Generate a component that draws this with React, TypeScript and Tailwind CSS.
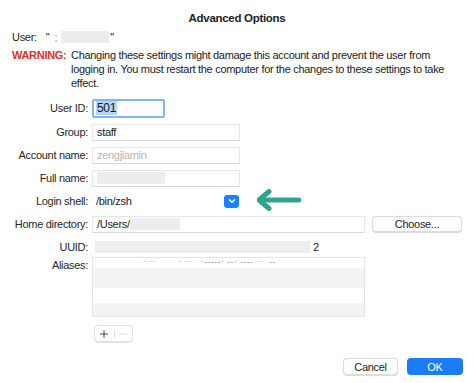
import { Plus, Minus } from 'lucide-react';

function Label({ children }: { children: React.ReactNode }) {
  return <div className="w-[84px] shrink-0 pr-[4px] text-right text-[#262626] whitespace-nowrap">{children}</div>;
}

function Field({ children, className = '' }: { children?: React.ReactNode; className?: string }) {
  return (
    <div
      className={`h-[17px] flex items-center border border-[#e6e6e6] border-b-[#d9d9d9] bg-white px-[4px] ${className}`}
    >
      {children}
    </div>
  );
}

function Redacted({ w }: { w: string }) {
  return <span className={`inline-block h-[12px] bg-[#ededed] ${w}`} />;
}

export default function App() {
  return (
    <div className="w-[474px] h-[383px] bg-white text-[11px] leading-[14px] tracking-[-0.3px] text-[#222] font-['Liberation_Sans',Arial,sans-serif] overflow-hidden">
      {/* Title */}
      <div className="pt-[11px] h-[25px] text-center text-[11.5px] font-bold text-[#1d1d1d]">Advanced Options</div>

      {/* User */}
      <div className="mt-[5px] px-[12px] flex items-center h-[14px]">
        <span>User:</span>
        <span className="ml-[9px]">"</span>
        <span className="ml-[5px] text-[#999]">;</span>
        <Redacted w="w-[48px] ml-[4px]" />
        <span className="ml-[1px]">"</span>
      </div>

      {/* Warning */}
      <div className="mt-[4px] pl-[12px] pr-[8px] flex">
        <div className="w-[59px] shrink-0 font-bold text-[#e0311f]">WARNING:</div>
        <div>
          Changing these settings might damage this account and prevent the user from logging in. You must restart the
          computer for the changes to these settings to take effect.
        </div>
      </div>

      {/* Form */}
      <div className="mt-[9px] pl-[8px] flex flex-col gap-[5px]">
        <div className="flex items-center h-[18px]">
          <Label>User ID:</Label>
          <div className="h-[19px] w-[73px] flex items-center rounded-[2px] border-[2px] border-[#86b4f2] px-[2px]">
            <span className="bg-[#b4d5fb] px-[1px] text-[12px] text-[#111]">501</span>
          </div>
        </div>

        <div className="mt-[1px] flex items-center h-[18px]">
          <Label>Group:</Label>
          <Field className="w-[148px]">staff</Field>
        </div>

        <div className="flex items-center h-[18px]">
          <Label>Account name:</Label>
          <Field className="w-[148px] text-[#b4b4b4]">zengjiamin</Field>
        </div>

        <div className="flex items-center h-[18px]">
          <Label>Full name:</Label>
          <Field className="w-[148px]">
            <Redacted w="w-[68px]" />
          </Field>
        </div>

        <div className="flex items-center h-[18px]">
          <Label>Login shell:</Label>
          <div className="w-[148px] h-[17px] flex items-center justify-between pl-[4px] pr-[1px]">
            <span>/bin/zsh</span>
            <span className="w-[15px] h-[13px] rounded-[3px] bg-[#1b82fb] flex items-center justify-center">
              <svg width="8" height="6" viewBox="0 0 8 6">
                <path d="M1.5 1.8 L4 4.2 L6.5 1.8" fill="none" stroke="white" strokeWidth="1.5" strokeLinecap="round" strokeLinejoin="round" />
              </svg>
            </span>
          </div>
          <svg className="ml-[17px] mt-[-3px]" width="44" height="22" viewBox="0 0 44 22">
            <path d="M42 11 H8" stroke="#2fa58d" strokeWidth="5" strokeLinecap="round" />
            <path d="M12 2.5 L2 11 L12 19.5" fill="none" stroke="#2fa58d" strokeWidth="5" strokeLinecap="round" strokeLinejoin="round" />
          </svg>
        </div>

        <div className="flex items-center h-[18px]">
          <Label>Home directory:</Label>
          <Field className="w-[273px]">
            <span>/Users/</span>
            <Redacted w="w-[50px]" />
          </Field>
          <button className="ml-[7px] w-[90px] h-[16px] rounded-[4px] border border-[#dcdcdc] bg-white text-[11px] leading-[14px] text-[#222] shadow-[0_0.5px_1px_rgba(0,0,0,0.15)]">
            Choose...
          </button>
        </div>

        <div className="flex items-center h-[18px]">
          <Label>UUID:</Label>
          <div className="flex items-center pl-[3px]">
            <Redacted w="w-[215px]" />
            <span className="ml-[3px]">2</span>
          </div>
        </div>

        <div className="mt-[-4px] flex items-start">
          <Label>
            <div className="pt-[1px]">Aliases:</div>
          </Label>
          <div className="w-[273px] h-[60px] border border-[#e4e4e4] flex flex-col overflow-hidden">
            <div className="h-[10px] bg-white pl-[50px] text-[7px] leading-[8px] tracking-[1px] text-[#555] whitespace-nowrap overflow-hidden">
              · ··&nbsp;&nbsp;&nbsp;&nbsp;&nbsp;&nbsp;&nbsp;&nbsp;· ··&nbsp;&nbsp;&nbsp;·-----· --· ---- ··&nbsp;&nbsp;--
            </div>
            <div className="h-[20px] bg-[#f3f3f3]" />
            <div className="h-[15px] bg-white" />
            <div className="flex-1 bg-[#f3f3f3]" />
          </div>
        </div>

        <div className="mt-[3px] pl-[86px]">
          <div className="w-[39px] h-[17px] flex items-center rounded-[4px] border border-[#e2e2e2] shadow-[0_0.5px_1px_rgba(0,0,0,0.12)]">
            <div className="w-[19px] flex justify-center">
              <Plus size={12} strokeWidth={1.6} color="#222" />
            </div>
            <div className="w-px h-[9px] bg-[#e0e0e0]" />
            <div className="w-[18px] flex justify-center">
              <Minus size={12} strokeWidth={1.2} color="#c4c4c4" />
            </div>
          </div>
        </div>
      </div>

      {/* Buttons */}
      <div className="mt-[16px] pr-[11px] flex justify-end gap-[9px]">
        <button className="w-[55px] h-[17px] rounded-[4px] border border-[#dcdcdc] bg-white text-[11px] leading-[14px] text-[#222] shadow-[0_0.5px_1px_rgba(0,0,0,0.15)]">
          Cancel
        </button>
        <button className="w-[56px] h-[17px] rounded-[4px] bg-[#1c7cf8] text-[11px] leading-[14px] text-white">
          OK
        </button>
      </div>
    </div>
  );
}
